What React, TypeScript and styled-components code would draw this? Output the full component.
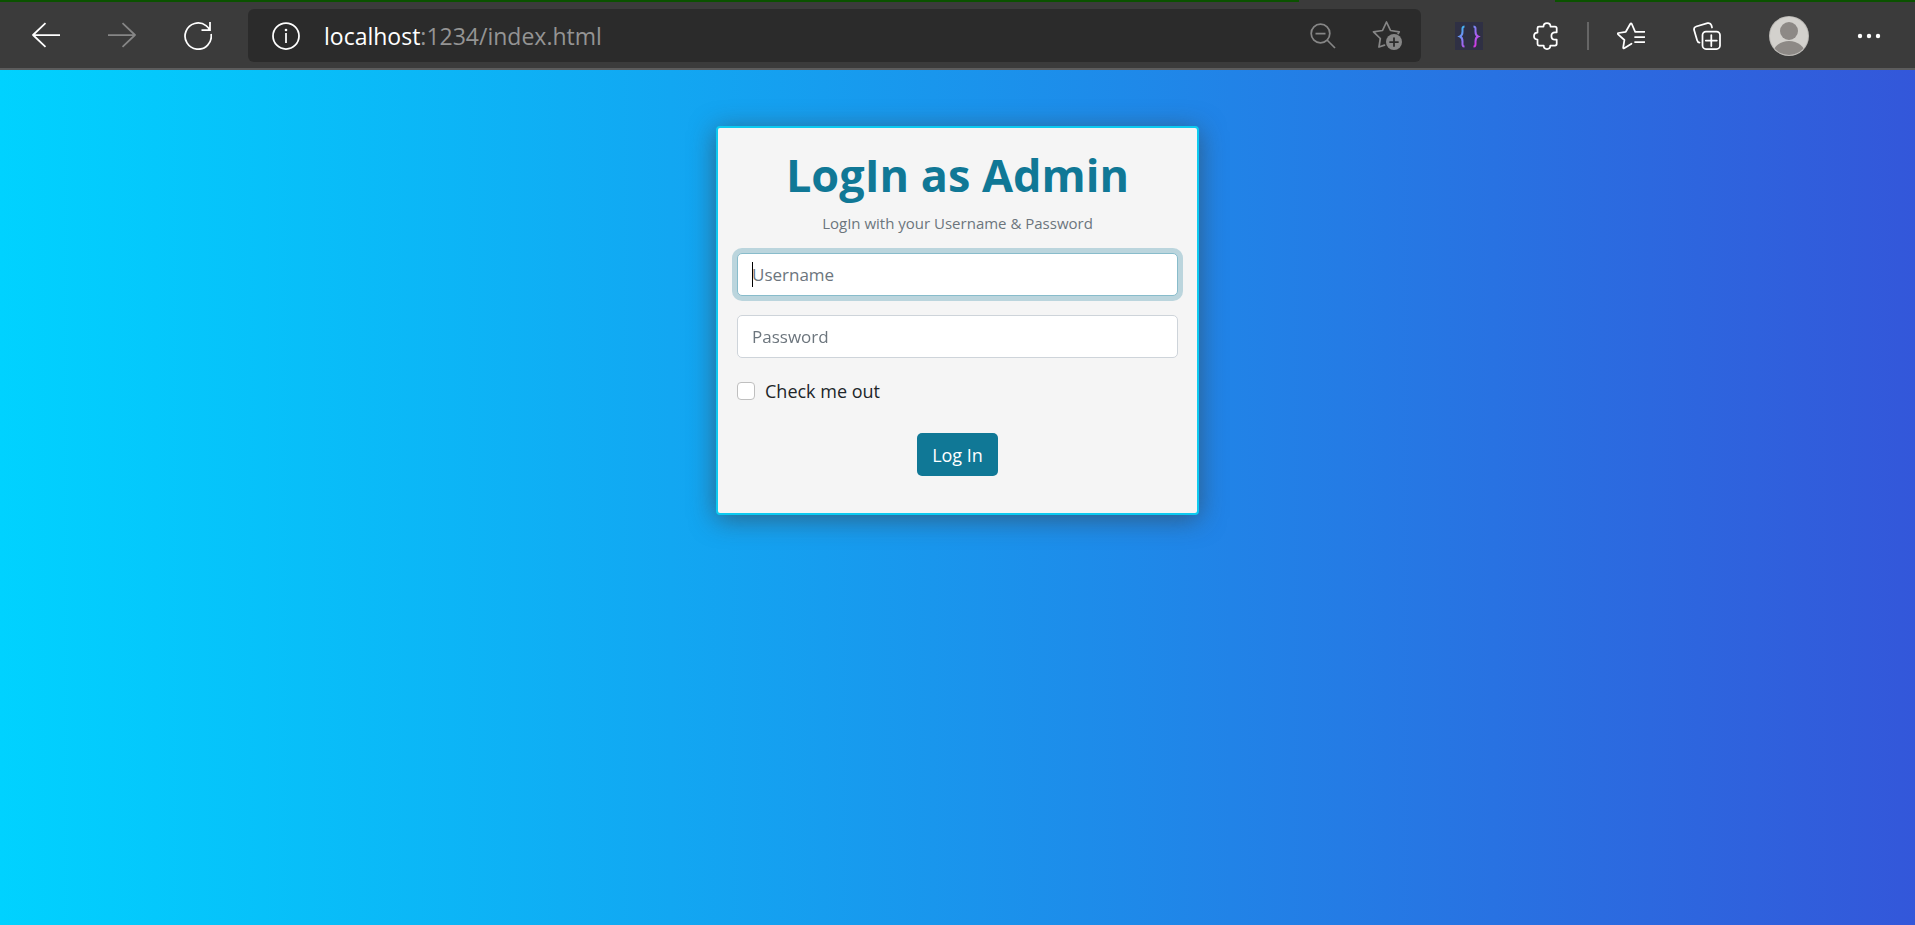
import React from "react";
import styled, { createGlobalStyle } from "styled-components";

const GlobalStyle = createGlobalStyle`
  * { box-sizing: border-box; }
  html, body { margin: 0; }
  body { font-family: "Open Sans", "Noto Sans", sans-serif; color: #212529; }
`;

const Page = styled.div`
  min-height: 100vh;
  display: flex;
  flex-direction: column;
`;

const Toolbar = styled.div`
  display: flex;
  align-items: center;
  height: 68px;
  padding: 1px 34px 0 32px;
  background: #3b3b3b;
  border-bottom: 2px solid #5c5c5c;
`;

const TabStrip = styled.div`
  display: flex;
  justify-content: flex-end;
  height: 2px;
  padding-right: 360px;
  background: #0b5200;
`;

const ActiveTab = styled.div`
  width: 256px;
  background: #3b3b3b;
`;

const Chrome = styled.header`
  display: flex;
  flex-direction: column;
`;

const IconButton = styled.button<{ $dim?: boolean }>`
  display: flex;
  flex: none;
  align-items: center;
  justify-content: center;
  padding: 0;
  border: 0;
  background: none;
  color: ${(p) => (p.$dim ? "#868686" : "#ffffff")};

  svg { display: block; }
`;

const NavGroup = styled.nav`
  display: flex;
  align-items: center;
  gap: 48px;
  margin-right: 36px;
`;

const AddressBar = styled.div`
  display: flex;
  flex: 1;
  align-items: center;
  height: 53px;
  padding: 0 19px 0 24px;
  border-radius: 6px;
  background: #2b2b2b;
`;

const Address = styled.div`
  flex: 1;
  margin-left: 24px;
  font-size: 23px;
  line-height: 32px;
  color: #949494;
`;

const Host = styled.span`
  color: #ffffff;
`;

const AddressActions = styled.div`
  display: flex;
  align-items: center;
  gap: 36px;
`;

const ToolGroup = styled.div`
  display: flex;
  align-items: center;
  margin-left: 34px;
  gap: 48px;
`;

const Divider = styled.span`
  width: 2px;
  height: 28px;
  margin: 0 -20px;
  background: #666666;
`;

const Main = styled.main`
  flex: 1;
  padding: 56px 16px;
  background: linear-gradient(90deg, #00d2ff 0%, #3a47d5 113%);
`;

const Card = styled.form`
  display: flex;
  flex-direction: column;
  max-width: 483px;
  margin: 0 auto;
  padding: 17px 19px 37px;
  border: 2px solid #0dcaf0;
  border-radius: 4px;
  background: #f5f5f5;
  box-shadow: 0 4px 26px rgba(60, 60, 60, 0.6);
`;

const Title = styled.h1`
  margin: 0;
  font-size: 45px;
  font-weight: 700;
  line-height: 60px;
  text-align: center;
  color: #107896;
`;

const Subtitle = styled.p`
  margin: 6px 0 18px;
  font-size: 15px;
  line-height: 24px;
  text-align: center;
  color: #6c757d;
`;

const FieldWrap = styled.div`
  position: relative;
  margin-bottom: 19px;

  /* steady text cursor while the focused field is still empty */
  &:has(input:focus:placeholder-shown)::before {
    content: "";
    position: absolute;
    top: 9px;
    left: 15px;
    width: 1px;
    height: 25px;
    background: #000000;
  }
`;

const Field = styled.input`
  display: block;
  width: 100%;
  height: 43px;
  padding: 0 14px;
  border: 1px solid #ced4da;
  border-radius: 5px;
  background: #ffffff;
  font-family: inherit;
  font-size: 17px;
  color: #212529;

  &::placeholder { color: #6c757d; opacity: 1; }

  &:focus {
    outline: 0;
    border-color: #88bccb;
    box-shadow: 0 0 0 5px rgba(16, 120, 150, 0.25);
  }

  &:focus:placeholder-shown { caret-color: transparent; }
`;

const CheckRow = styled.div`
  display: flex;
  align-items: center;
  gap: 10px;
  height: 28px;
`;

const Checkbox = styled.input`
  appearance: none;
  width: 18px;
  height: 18px;
  margin: 0;
  border: 1px solid #bfbfbf;
  border-radius: 4px;
  background: #ffffff;

  &:checked { background: #107896; }
`;

const CheckLabel = styled.label`
  font-size: 18px;
  line-height: 28px;
`;

const SubmitButton = styled.button`
  align-self: center;
  height: 43px;
  margin-top: 28px;
  padding: 0 15px;
  border: 0;
  border-radius: 5px;
  background: #107896;
  font-family: inherit;
  font-size: 18px;
  color: #ffffff;
`;

const stroke = {
  fill: "none",
  stroke: "currentColor",
  strokeWidth: 1.75,
  strokeLinecap: "round" as const,
  strokeLinejoin: "round" as const,
};

const BackIcon = () => (
  <svg width="28" height="28" viewBox="0 1 28 28" {...stroke} strokeLinecap="butt">
    <path d="M28 14H1M13.500 2.200 1 14l12.500 11.800" />
  </svg>
);

const ForwardIcon = () => (
  <svg width="28" height="28" viewBox="0 1 28 28" {...stroke} strokeLinecap="butt">
    <path d="M0 14h27M14.500 2.200 27 14 14.500 25.800" />
  </svg>
);

const ReloadIcon = () => (
  <svg width="28" height="28" viewBox="0 0 28 28" {...stroke} strokeLinecap="butt" strokeLinejoin="miter">
    <path d="M27.100 12A13.100 13.100 0 1 1 22 3.600Q24.300 5.300 25.800 8M26 0v8.200h-8.500" />
  </svg>
);

const InfoIcon = () => (
  <svg width="28" height="28" viewBox="0 0 28 28" {...stroke} strokeLinecap="butt">
    <circle cx="14" cy="14" r="13" />
    <path d="M14 11v10" />
    <circle cx="14" cy="8" r="1.300" fill="currentColor" stroke="none" />
  </svg>
);

const ZoomOutIcon = () => (
  <svg width="26" height="26" viewBox="0 0 26 26" {...stroke} strokeLinecap="butt">
    <circle cx="10.500" cy="10.500" r="9.300" />
    <path d="M5.500 10.500h10M17 17l8 8" />
  </svg>
);

const StarAddIcon = () => (
  <svg width="30" height="30" viewBox="0 1 30 30" {...stroke}>
    <path d="M12.500 25.200 7 27l1.300-8.500L1.500 11.800l9-1.300L14.500 2l4 8.500 8.700 1.300-1 1.700" />
    <circle cx="22" cy="22" r="8" fill="currentColor" stroke="none" />
    <path d="M22 18v8M18 22h8" stroke="#2b2b2b" />
  </svg>
);

const BracesIcon = () => (
  <svg width="28" height="28" viewBox="0 0 28 28" fill="none" strokeWidth="2">
    <defs>
      <linearGradient id="braces" x1="5" y1="4" x2="23" y2="25" gradientUnits="userSpaceOnUse">
        <stop offset="0" stopColor="#35c1f5" />
        <stop offset="0.500" stopColor="#9570f5" />
        <stop offset="1" stopColor="#e02be0" />
      </linearGradient>
    </defs>
    <rect width="28" height="28" fill="#2f3044" />
    <path stroke="url(#braces)" d="M9.500 4.500C7 4.500 7.500 7 7.500 9.500S7.500 13.500 5 14.500c2.500 1 2.500 2.500 2.500 5s-.5 5 2 5M18.500 4.500c2.500 0 2 2.500 2 5s0 4 2.500 5c-2.500 1-2.500 2.500-2.500 5s.5 5-2 5" />
  </svg>
);

const PuzzleIcon = () => (
  <svg width="28" height="28" viewBox="-2 0 28 28" {...stroke}>
    <path d="M6 4.500h4.500C10.500 2.300 12 1 14 1S17.500 2.300 17.500 4.500H22q1.700 0 1.700 1.700V10.300h-1.700c-2.200 0-3.600 1.700-3.600 3.700s1.400 3.700 3.600 3.700h1.700v4.100q0 1.700-1.700 1.700H17.300c0 2.200-1.400 3.500-3.300 3.500S10.700 25.700 10.700 23.500H6q-1.500 0-1.500-1.500V17.500C2.400 17.500 1 16 1 14s1.400-3.500 3.500-3.500V6Q4.500 4.500 6 4.500Z" />
  </svg>
);

const FavoritesIcon = () => (
  <svg width="28" height="28" viewBox="0 0 28 28" {...stroke}>
    <path d="M14.500 21.700 7.200 26.300q-1 .4-1-.8L7.400 18 1.100 12.300q-.8-1 .4-1.300l7.300-1.200L13.200 2q.8-1.200 1.600 0l3.400 7.800H27.500M18 15h9.500M18 20h9.500" />
  </svg>
);

const CollectionsIcon = () => (
  <svg width="28" height="28" viewBox="0 0 28 28" {...stroke}>
    <path d="M6.500 20.700q-1.800-.3-2.400-2.500L1.100 8.100Q.5 5.300 3.200 4.500L14.500 1.200q3-.7 3.900 2.100l.6 2.200" />
    <rect x="9.500" y="9.500" width="17.500" height="17.500" rx="3.500" />
    <path d="M18.300 13v11M12.800 18.500h11" />
  </svg>
);

const AvatarIcon = () => (
  <svg width="40" height="40" viewBox="0 0 40 40">
    <defs>
      <clipPath id="avatar"><circle cx="20" cy="20" r="19" /></clipPath>
    </defs>
    <circle cx="20" cy="20" r="20" fill="#bcbab6" />
    <circle cx="20" cy="20" r="19" fill="#d3d1cd" />
    <g fill="#8d8986" clipPath="url(#avatar)">
      <circle cx="20" cy="15" r="9" />
      <ellipse cx="20" cy="38" rx="16" ry="13" />
    </g>
  </svg>
);

const MoreIcon = () => (
  <svg width="24" height="6" viewBox="0 0 24 6" fill="currentColor">
    <circle cx="3" cy="3" r="2.200" />
    <circle cx="12" cy="3" r="2.200" />
    <circle cx="21" cy="3" r="2.200" />
  </svg>
);

export default function App() {
  return (
    <Page>
      <GlobalStyle />
      <Chrome>
        <TabStrip><ActiveTab /></TabStrip>
        <Toolbar>
          <NavGroup>
            <IconButton type="button" aria-label="Back"><BackIcon /></IconButton>
            <IconButton type="button" aria-label="Forward" $dim><ForwardIcon /></IconButton>
            <IconButton type="button" aria-label="Refresh"><ReloadIcon /></IconButton>
          </NavGroup>
          <AddressBar>
            <IconButton type="button" aria-label="Site information"><InfoIcon /></IconButton>
            <Address><Host>localhost</Host>:1234/index.html</Address>
            <AddressActions>
              <IconButton type="button" aria-label="Zoom out" $dim><ZoomOutIcon /></IconButton>
              <IconButton type="button" aria-label="Add to favorites" $dim><StarAddIcon /></IconButton>
            </AddressActions>
          </AddressBar>
          <ToolGroup>
            <IconButton type="button" aria-label="Code extension"><BracesIcon /></IconButton>
            <IconButton type="button" aria-label="Extensions"><PuzzleIcon /></IconButton>
            <Divider />
            <IconButton type="button" aria-label="Favorites"><FavoritesIcon /></IconButton>
            <IconButton type="button" aria-label="Collections"><CollectionsIcon /></IconButton>
            <IconButton type="button" aria-label="Profile"><AvatarIcon /></IconButton>
            <IconButton type="button" aria-label="More"><MoreIcon /></IconButton>
          </ToolGroup>
        </Toolbar>
      </Chrome>
      <Main>
        <Card>
          <Title>LogIn as Admin</Title>
          <Subtitle>LogIn with your Username &amp; Password</Subtitle>
          <FieldWrap>
            <Field type="text" placeholder="Username" aria-label="Username" autoFocus />
          </FieldWrap>
          <FieldWrap>
            <Field type="password" placeholder="Password" aria-label="Password" />
          </FieldWrap>
          <CheckRow>
            <Checkbox type="checkbox" id="check-me-out" />
            <CheckLabel htmlFor="check-me-out">Check me out</CheckLabel>
          </CheckRow>
          <SubmitButton type="submit">Log In</SubmitButton>
        </Card>
      </Main>
    </Page>
  );
}
